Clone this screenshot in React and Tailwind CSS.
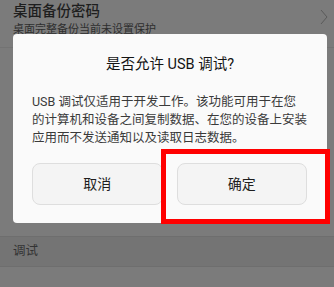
export default function App() {
  return (
    <div className="relative w-[334px] h-[287px] overflow-hidden bg-[#7b7b7b] font-['Roboto','Noto_Sans_CJK_SC',sans-serif]">
      {/* settings list behind the dim overlay */}
      <div className="flex flex-col">
        <div className="flex items-center justify-between h-[48px] pl-[13px] pr-[6px] border-b border-[#737373]">
          <div className="flex flex-col -mt-[8px]">
            <div className="text-[14.5px] leading-[20px] text-[#1e1e1e] font-medium">桌面备份密码</div>
            <div className="text-[11px] leading-[16px] text-[#2e2e2e]">桌面完整备份当前未设置保护</div>
          </div>
          <svg width="8" height="16" viewBox="0 0 8 16" className="-mt-[14px]">
            <path d="M1 1 L7 8 L1 15" fill="none" stroke="#5a5a5a" strokeWidth="1" />
          </svg>
        </div>
        <div className="h-[188px]" />
        <div className="flex items-center h-[31px] pl-[13px] bg-[#747474] border-y border-[#6e6e6e]">
          <span className="text-[12.5px] text-[#333]">调试</span>
        </div>
        <div className="flex items-center h-[40px] pl-[13px] pt-[14px]">
          <span className="text-[14px] text-[#1e1e1e]">USB 调试</span>
        </div>
      </div>

      {/* dialog */}
      <div className="absolute left-[13px] top-[34px] w-[314px] h-[189px] rounded-[4px] bg-[#fafafa] flex flex-col">
        <div className="pt-[21px] text-center text-[14.5px] leading-[20px] text-[#141414]">是否允许 USB 调试?</div>
        <p className="mt-[18px] pl-[19px] pr-[10px] text-[12.5px] leading-[18px] text-[#3a3a3a] whitespace-nowrap">
          USB 调试仅适用于开发工作。该功能可用于在您
          <br />
          的计算机和设备之间复制数据、在您的设备上安装
          <br />
          应用而不发送通知以及读取日志数据。
        </p>
        <div className="mt-[16px] flex gap-[14px] pl-[19px] pr-[20px]">
          <button className="flex-1 h-[42px] rounded-[8px] border border-[#dedede] bg-[#f4f4f4] text-[14px] text-[#1e1e1e]">取消</button>
          <button className="flex-1 h-[42px] rounded-[8px] border border-[#dedede] bg-[#f4f4f4] text-[14px] text-[#1e1e1e]">确定</button>
        </div>
      </div>

      {/* highlight annotation */}
      <div className="absolute left-[161px] top-[149px] w-[169px] h-[75px] border-[5px] border-[#ff0000]" />
    </div>
  );
}
